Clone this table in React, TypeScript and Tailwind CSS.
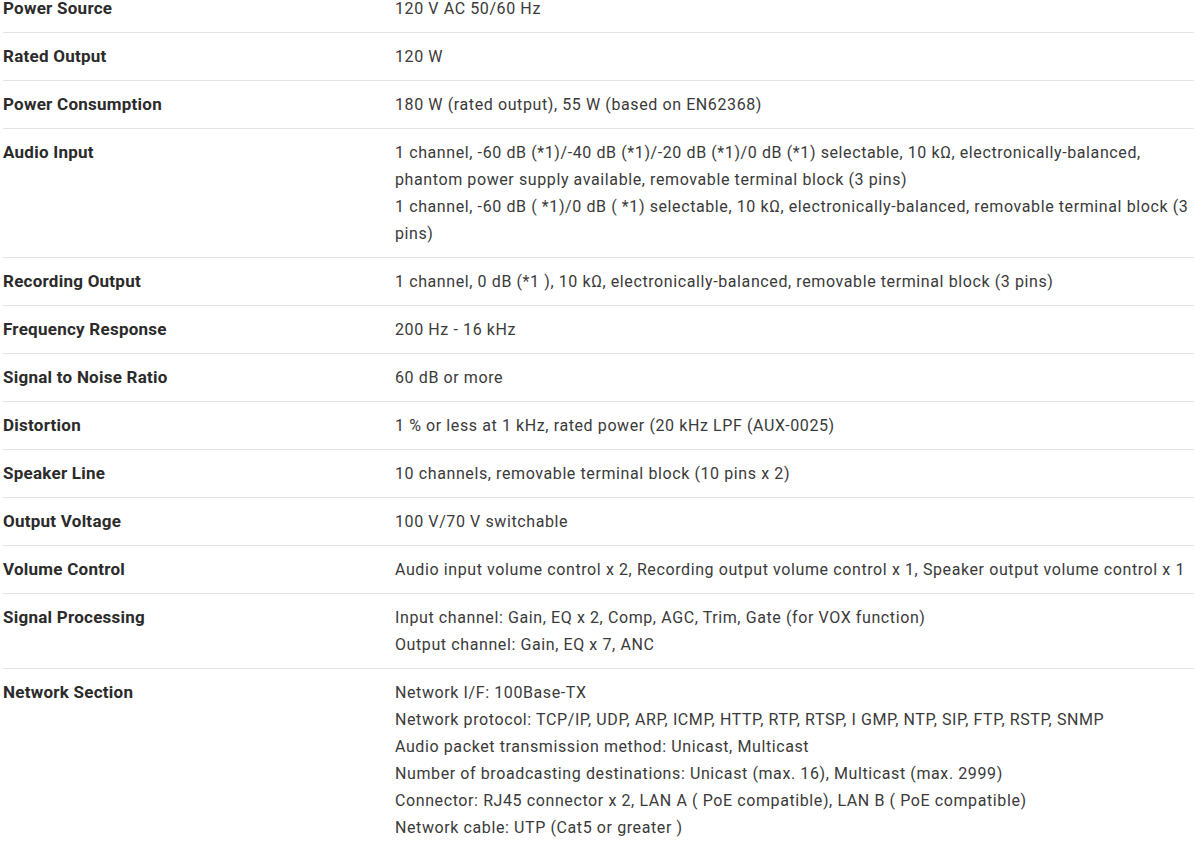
const rows: { label: string; lines: string[] }[] = [
  { label: "Power Source", lines: ["120 V AC 50/60 Hz"] },
  { label: "Rated Output", lines: ["120 W"] },
  { label: "Power Consumption", lines: ["180 W (rated output), 55 W (based on EN62368)"] },
  {
    label: "Audio Input",
    lines: [
      "1 channel, -60 dB (*1)/-40 dB (*1)/-20 dB (*1)/0 dB (*1) selectable, 10 kΩ, electronically-balanced, phantom power supply available, removable terminal block (3 pins)",
      "1 channel, -60 dB ( *1)/0 dB ( *1) selectable, 10 kΩ, electronically-balanced, removable terminal block (3 pins)",
    ],
  },
  { label: "Recording Output", lines: ["1 channel, 0 dB (*1 ), 10 kΩ, electronically-balanced, removable terminal block (3 pins)"] },
  { label: "Frequency Response", lines: ["200 Hz - 16 kHz"] },
  { label: "Signal to Noise Ratio", lines: ["60 dB or more"] },
  { label: "Distortion", lines: ["1 % or less at 1 kHz, rated power (20 kHz LPF (AUX-0025)"] },
  { label: "Speaker Line", lines: ["10 channels, removable terminal block (10 pins x 2)"] },
  { label: "Output Voltage", lines: ["100 V/70 V switchable"] },
  {
    label: "Volume Control",
    lines: ["Audio input volume control x 2, Recording output volume control x 1, Speaker output volume control x 1"],
  },
  {
    label: "Signal Processing",
    lines: ["Input channel: Gain, EQ x 2, Comp, AGC, Trim, Gate (for VOX function)", "Output channel: Gain, EQ x 7, ANC"],
  },
  {
    label: "Network Section",
    lines: [
      "Network I/F: 100Base-TX",
      "Network protocol: TCP/IP, UDP, ARP, ICMP, HTTP, RTP, RTSP, I GMP, NTP, SIP, FTP, RSTP, SNMP",
      "Audio packet transmission method: Unicast, Multicast",
      "Number of broadcasting destinations: Unicast (max. 16), Multicast (max. 2999)",
      "Connector: RJ45 connector x 2, LAN A ( PoE compatible), LAN B ( PoE compatible)",
      "Network cable: UTP (Cat5 or greater )",
    ],
  },
]

export default function App() {
  return (
    <div className="w-full bg-white overflow-hidden h-[841px] font-['Roboto',sans-serif]">
      <div className="-mt-[15px] pl-[3px]">
        {rows.map((row) => (
          <div key={row.label} className="flex border-b border-[#e3e3e3] py-[10px]">
            <div className="w-[392px] shrink-0 text-[17px] leading-[27px] font-bold tracking-[0.25px] text-[#2b2b2b]">
              {row.label}
            </div>
            <div className="flex-1 text-[16px] leading-[27px] tracking-[0.6px] text-[#3a3a3a]">
              {row.lines.map((line, i) => (
                <p key={i}>{line}</p>
              ))}
            </div>
          </div>
        ))}
      </div>
    </div>
  )
}
